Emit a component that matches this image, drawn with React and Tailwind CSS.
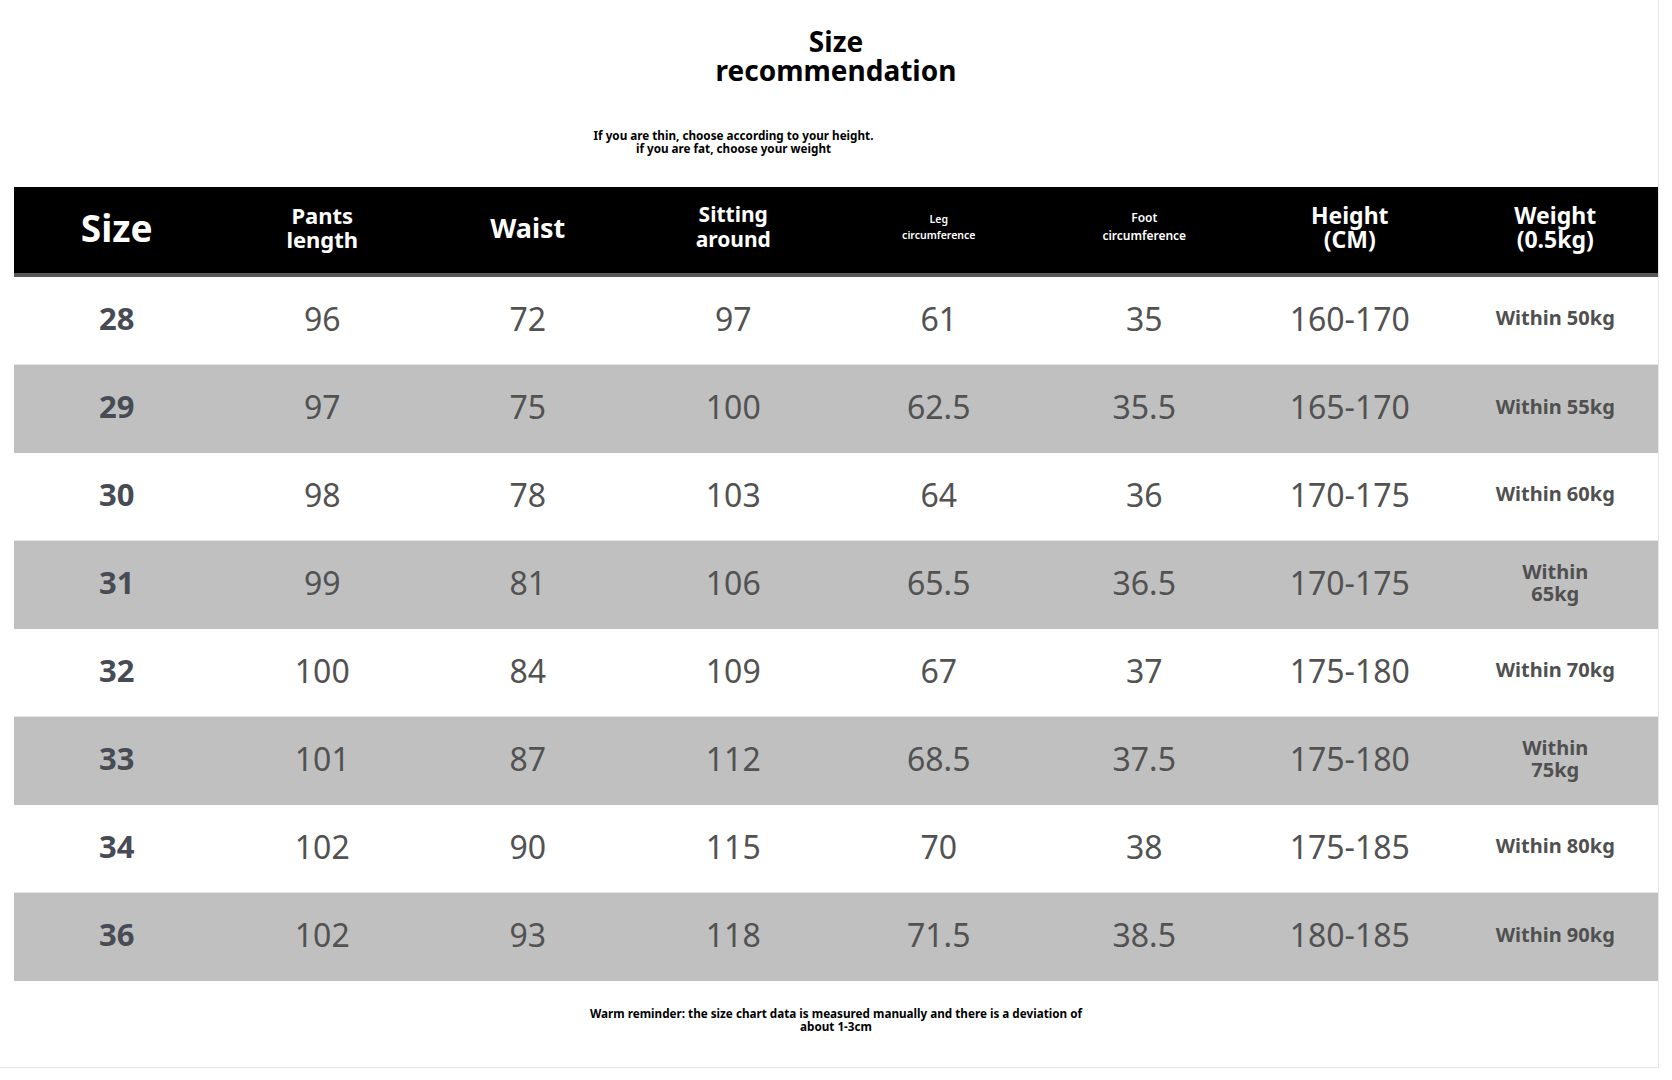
import React from "react";

const rows = [
  ["28", "96", "72", "97", "61", "35", "160-170", ["Within 50kg"]],
  ["29", "97", "75", "100", "62.5", "35.5", "165-170", ["Within 55kg"]],
  ["30", "98", "78", "103", "64", "36", "170-175", ["Within 60kg"]],
  ["31", "99", "81", "106", "65.5", "36.5", "170-175", ["Within", "65kg"]],
  ["32", "100", "84", "109", "67", "37", "175-180", ["Within 70kg"]],
  ["33", "101", "87", "112", "68.5", "37.5", "175-180", ["Within", "75kg"]],
  ["34", "102", "90", "115", "70", "38", "175-185", ["Within 80kg"]],
  ["36", "102", "93", "118", "71.5", "38.5", "180-185", ["Within 90kg"]],
];

function Head({ children, className }) {
  return (
    <div className={`flex flex-col items-center justify-center pb-[6px] text-center text-white font-bold ${className}`}>
      {children}
    </div>
  );
}

export default function App() {
  return (
    <div className="w-[1672px] h-[1080px] bg-white font-['Noto_Sans',sans-serif]">
      <div className="w-[1659px] h-[1068px] border-r border-b border-[#e6e6e6] flex flex-col">
        {/* title */}
        <div className="pt-[27px] pl-[14px] flex justify-center">
          <h1 className="text-[28px] leading-[29px] font-bold text-black text-center">
            Size<br />recommendation
          </h1>
        </div>

        <div className="mt-[44px] pl-[14px] pr-[205px] flex justify-center">
          <p className="text-[11.7px] leading-[12.5px] font-bold text-black text-center">
            If you are thin, choose according to your height.<br />
            if you are fat, choose your weight
          </p>
        </div>

        {/* table */}
        <div className="mt-[33px] ml-[14px] w-[1644px]">
          <div className="grid grid-cols-8 h-[90px] bg-black border-b-4 border-[#585858]">
            <Head className="text-[37px] leading-none">Size</Head>
            <Head className="text-[22px] leading-[24px]">
              <span>Pants</span>
              <span>length</span>
            </Head>
            <Head className="text-[27px] leading-none">Waist</Head>
            <Head className="text-[21px] leading-[25px]">
              <span>Sitting</span>
              <span>around</span>
            </Head>
            <Head className="text-[10.5px] leading-[16px] font-semibold">
              <span>Leg</span>
              <span>circumference</span>
            </Head>
            <Head className="text-[12px] leading-[18px] font-semibold">
              <span>Foot</span>
              <span>circumference</span>
            </Head>
            <Head className="text-[23px] leading-[24px]">
              <span>Height</span>
              <span>(CM)</span>
            </Head>
            <Head className="text-[23px] leading-[24px]">
              <span>Weight</span>
              <span>(0.5kg)</span>
            </Head>
          </div>

          {rows.map((r, i) => (
            <div
              key={r[0]}
              className={`grid grid-cols-8 h-[88px] ${i % 2 ? "bg-[#c0c0c0]" : "bg-white border-b border-[#e4e4e4]"}`}
            >
              <div className="flex items-center justify-center pb-[5px] text-[31px] font-bold text-[#474b53]">{r[0]}</div>
              {r.slice(1, 7).map((v, j) => (
                <div key={j} className="flex items-center justify-center pb-[4px] text-[32px] text-[#525252]">
                  {v}
                </div>
              ))}
              <div className="flex flex-col items-center justify-center pb-[5px] text-[20px] leading-[22px] font-bold text-[#505050] text-center">
                {r[7].map((t) => (
                  <span key={t}>{t}</span>
                ))}
              </div>
            </div>
          ))}
        </div>

        <div className="mt-[26px] pl-[14px] flex justify-center">
          <p className="text-[11.7px] leading-[12.5px] font-bold text-black text-center">
            Warm reminder: the size chart data is measured manually and there is a deviation of<br />
            about 1-3cm
          </p>
        </div>
      </div>
    </div>
  );
}
